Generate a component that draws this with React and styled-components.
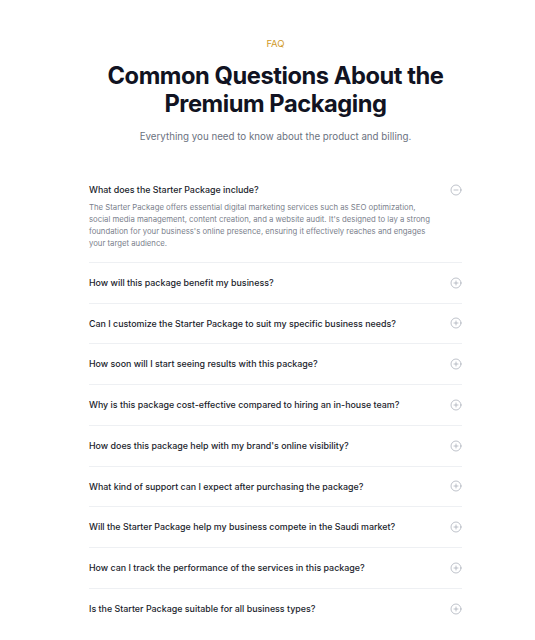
import React, { useState } from 'react';
import styled, { createGlobalStyle } from 'styled-components';
import { CirclePlus, CircleMinus } from 'lucide-react';

const faqs = [
	{
		q: 'What does the Starter Package include?',
		a: "The Starter Package offers essential digital marketing services such as SEO optimization, social media management, content creation, and a website audit. It's designed to lay a strong foundation for your business's online presence, ensuring it effectively reaches and engages your target audience.",
	},
	{ q: 'How will this package benefit my business?' },
	{ q: 'Can I customize the Starter Package to suit my specific business needs?' },
	{ q: 'How soon will I start seeing results with this package?' },
	{ q: 'Why is this package cost-effective compared to hiring an in-house team?' },
	{ q: "How does this package help with my brand's online visibility?" },
	{ q: 'What kind of support can I expect after purchasing the package?' },
	{ q: 'Will the Starter Package help my business compete in the Saudi market?' },
	{ q: 'How can I track the performance of the services in this package?' },
	{ q: 'Is the Starter Package suitable for all business types?' },
];

const App = () => {
	const [open, setOpen] = useState(0);
	return (
		<>
			<GlobalStyle />
			<Page>
				<Header>
					<Eyebrow>FAQ</Eyebrow>
					<Title>
						Common Questions About the
						<br />
						Premium Packaging
					</Title>
					<Subtitle>Everything you need to know about the product and billing.</Subtitle>
				</Header>
				<List>
					{faqs.map((item, i) => (
						<Item key={i}>
							<Question onClick={() => setOpen(open === i ? -1 : i)}>
								<span>{item.q}</span>
								<IconWrap>
									{open === i ? (
										<CircleMinus size={12} strokeWidth={1.3} />
									) : (
										<CirclePlus size={12} strokeWidth={1.3} />
									)}
								</IconWrap>
							</Question>
							{open === i && item.a && <Answer>{item.a}</Answer>}
						</Item>
					))}
				</List>
			</Page>
		</>
	);
};

const GlobalStyle = createGlobalStyle`
	body {
		margin: 0;
		background: #ffffff;
		font-family: Inter, 'Noto Sans', sans-serif;
		-webkit-font-smoothing: antialiased;
	}
`;

const Page = styled.div`
	padding: 37px 0 40px 16px;
`;

const Header = styled.div`
	display: flex;
	flex-direction: column;
	align-items: center;
	text-align: center;
`;

const Eyebrow = styled.p`
	margin: 0;
	font-size: 9.5px;
	line-height: 14px;
	color: #d19a2a;
	font-weight: 400;
`;

const Title = styled.h2`
	margin: 11px 0 0;
	font-size: 23.7px;
	line-height: 28px;
	font-weight: 700;
	color: #111322;
	letter-spacing: -0.45px;
`;

const Subtitle = styled.p`
	margin: 11px 0 0;
	font-size: 9.75px;
	line-height: 15px;
	color: #6b7280;
`;

const List = styled.div`
	width: 373px;
	margin: 26px auto 0;
`;

const Item = styled.div`
	padding: 13px 0;
	border-bottom: 1px solid #eef0f3;
	&:last-child {
		border-bottom: none;
	}
`;

const Question = styled.div`
	display: flex;
	align-items: center;
	justify-content: space-between;
	font-size: 8.9px;
	line-height: 13.75px;
	font-weight: 500;
	color: #1a1d2b;
	cursor: pointer;
`;

const IconWrap = styled.span`
	display: flex;
	color: #9ca3af;
`;

const Answer = styled.p`
	margin: 4px 0 0;
	max-width: 342px;
	font-size: 7.75px;
	line-height: 12px;
	color: #7a808c;
`;

export default App;
